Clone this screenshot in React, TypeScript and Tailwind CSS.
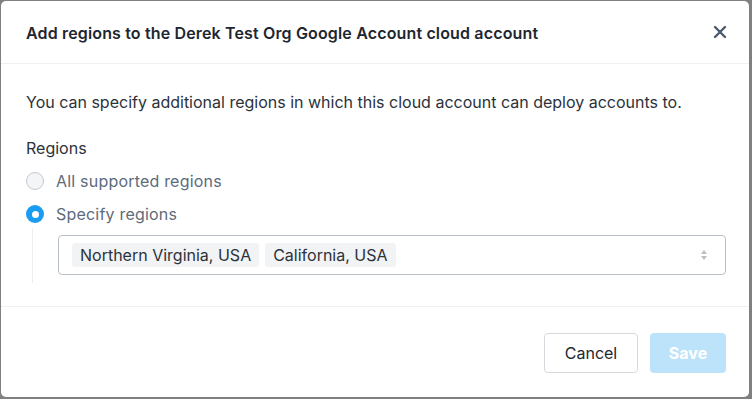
import React from "react";

export default function App() {
  return (
    <div className="w-[752px] h-[399px] bg-[#808080] pl-px pt-px pr-[3px] pb-[2px]" style={{ fontFamily: 'Inter, sans-serif' }}>
      <div className="w-full h-full bg-white rounded-[5px] flex flex-col">
        <div className="h-[63px] flex items-center justify-between pl-[25px] pr-[22px] border-b border-[#eef0f2]">
          <h2 className="text-[16px] font-semibold text-[#1e2630] tracking-[0.15px] pt-px">Add regions to the Derek Test Org Google Account cloud account</h2>
          <svg width="14" height="14" viewBox="0 0 14 14" className="text-[#4a5a6a]">
            <path d="M2 2 L12 12 M12 2 L2 12" stroke="currentColor" strokeWidth="2.4" strokeLinecap="round" />
          </svg>
        </div>
        <div className="flex-1 pl-[25px] pr-[23px] pt-[27px] border-b border-[#eef0f2]">
          <p className="text-[16px] text-[#2b323a] leading-[22px]">You can specify additional regions in which this cloud account can deploy accounts to.</p>
          <div className="mt-[24px] text-[16px] text-[#2b323a] leading-[22px]">Regions</div>
          <div className="mt-[11px] flex items-center gap-[12px] h-[22px]">
            <span className="w-[18px] h-[18px] rounded-full border border-[#c3c8ce] bg-[#f4f5f7]" />
            <span className="text-[16px] text-[#5d6b7b] tracking-[0.2px]">All supported regions</span>
          </div>
          <div className="mt-[11px] flex items-center gap-[12px] h-[22px]">
            <span className="w-[18px] h-[18px] rounded-full bg-[#1a9cf2] flex items-center justify-center">
              <span className="w-[7px] h-[7px] rounded-full bg-white" />
            </span>
            <span className="text-[16px] text-[#5d6b7b] tracking-[0.2px]">Specify regions</span>
          </div>
          <div className="ml-[6px] mt-[3px] border-l border-[#eceef0] pl-[25px] pt-[7px] pb-[8px]">
            <div className="h-[40px] border border-[#b9c0c8] rounded-[4px] flex items-center pl-[13px] pr-[17px] gap-[6px]">
              <span className="h-[24px] px-[8px] rounded-[3px] bg-[#f1f3f5] text-[16px] text-[#2b323a] flex items-center">Northern Virginia, USA</span>
              <span className="h-[24px] px-[8px] rounded-[3px] bg-[#f1f3f5] text-[16px] text-[#2b323a] flex items-center">California, USA</span>
              <div className="flex-1" />
              <svg width="8" height="14" viewBox="0 0 8 14">
                <path d="M4 2 L7 6 H1 Z" fill="#b7bec6" />
                <path d="M4 12 L7 8 H1 Z" fill="#b7bec6" />
              </svg>
            </div>
          </div>
        </div>
        <div className="h-[90px] flex items-center justify-end pr-[23px] pt-[2px] gap-[12px]">
          <button className="h-[40px] w-[94px] rounded-[4px] border border-[#d5d9de] bg-white text-[16px] text-[#1e2630]">Cancel</button>
          <button className="h-[40px] w-[76px] rounded-[4px] bg-[#bde3fb] text-[16px] font-bold text-white">Save</button>
        </div>
      </div>
    </div>
  );
}
